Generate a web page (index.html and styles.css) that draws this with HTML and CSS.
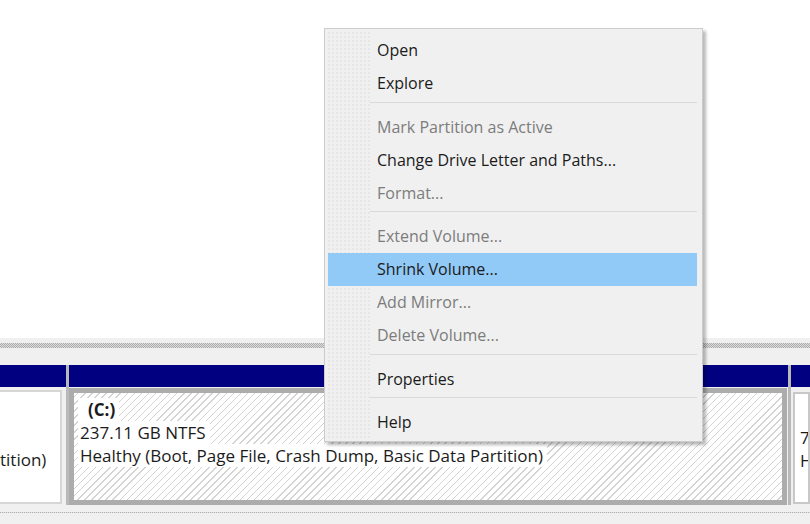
FILE: index.html
```html
<!DOCTYPE html>
<html>
<head>
<meta charset="utf-8">
<link rel="stylesheet" href="styles.css">
</head>
<body>
<div class="screen">
  <div class="top-pane"></div>
  <div class="splitter"><div class="splitter-line"></div></div>
  <div class="disk-row">
    <div class="part part-left">
      <div class="part-head"></div>
      <div class="part-body">
        <div class="box box-plain box-left">
          <div class="line"></div>
          <div class="line"></div>
          <div class="line line-right">tition)</div>
        </div>
      </div>
    </div>
    <div class="divider"></div>
    <div class="part part-c">
      <div class="part-head"></div>
      <div class="part-body">
        <div class="box box-sel">
          <div class="line"><span class="tag bold">(C:)</span></div>
          <div class="line"><span class="tag">237.11 GB NTFS</span></div>
          <div class="line"><span class="tag">Healthy (Boot, Page File, Crash Dump, Basic Data Partition)</span></div>
        </div>
      </div>
    </div>
    <div class="divider"></div>
    <div class="part part-right">
      <div class="part-head"></div>
      <div class="part-body">
        <div class="box box-plain box-right">
          <div class="line"></div>
          <div class="line">7</div>
          <div class="line">H</div>
        </div>
      </div>
    </div>
  </div>
  <div class="bottom"><div class="bottom-line"></div></div>

  <div class="menu">
    <div class="item">Open</div>
    <div class="item">Explore</div>
    <div class="sep"></div>
    <div class="item disabled">Mark Partition as Active</div>
    <div class="item">Change Drive Letter and Paths...</div>
    <div class="item disabled">Format...</div>
    <div class="sep"></div>
    <div class="item disabled">Extend Volume...</div>
    <div class="item hover">Shrink Volume...</div>
    <div class="item disabled">Add Mirror...</div>
    <div class="item disabled">Delete Volume...</div>
    <div class="sep"></div>
    <div class="item">Properties</div>
    <div class="sep"></div>
    <div class="item">Help</div>
  </div>
</div>
</body>
</html>
```
FILE: styles.css
```css
* { box-sizing: border-box; }
html, body { margin: 0; padding: 0; }
body {
  width: 810px;
  height: 524px;
  overflow: hidden;
  background: #ffffff;
  font-family: "Open Sans", "Noto Sans", sans-serif;
  font-size: 17px;
  color: #1b1b1b;
}
.screen {
  position: relative;
  width: 810px;
  height: 524px;
  display: flex;
  flex-direction: column;
}
.top-pane {
  height: 338px;
  background: #fff;
}
.splitter {
  height: 27px;
  background: #f0f0f0;
  padding-top: 5px;
}
.splitter-line {
  height: 5px;
  background: repeating-conic-gradient(#acacac 0 25%, #dcdcdc 0 50%) 0 0 / 2px 2px;
}
.disk-row {
  height: 140px;
  display: flex;
  background: #f0f0f0;
}
.divider {
  width: 3px;
  background: #b9b9b9;
}
.part { display: flex; flex-direction: column; }
.part-left { width: 66px; }
.part-c { flex: 1; }
.part-right { width: 19px; }
.part-head {
  height: 22px;
  background: #000080;
}
.part-body {
  flex: 1;
  padding-top: 1px;
}
.box {
  height: 117px;
  overflow: hidden;
  white-space: nowrap;
}
.box-plain {
  background: #fff;
  border: 2px solid #d6d6d6;
  padding-top: 10px;
}
.box-left {
  width: 62px;
  border-left: none;
  height: 114px;
  margin-top: 2px;
}
.line-right {
  text-align: right;
  padding-right: 14px;
}
.box-right {
  margin-left: 2px;
  height: 112px;
  margin-top: 4px;
  border-color: #c8c8c8;
  padding-left: 5px;
  padding-top: 9px;
}
.box-sel {
  border: 5px solid #acacac;
  background-color: #ffffff;
  background-image: repeating-linear-gradient(135deg, #ffffff 0 2.5px, #d3d3d3 2.5px 3.5px, #ffffff 3.5px 5px);
  padding: 5px 0 0 4px;
  margin-right: 1px;
}
.line {
  height: 23px;
  line-height: 23px;
}
.tag {
  background: #fff;
  padding: 0 4px 0 2px;
}
.bold {
  font-weight: 700;
  padding-left: 10px;
}
.bottom {
  flex: 1;
  background: #f0f0f0;
  padding-top: 7px;
}
.bottom-line {
  height: 1px;
  background: repeating-linear-gradient(90deg, #b0b0b0 0 1px, #e0e0e0 1px 2px);
}

/* context menu */
.menu {
  position: absolute;
  left: 324px;
  top: 28px;
  width: 379px;
  height: 414px;
  background: #f0f0f0;
  border: 1px solid #cccccc;
  padding: 5px 5px 2px 3px;
  box-shadow: 3px 3px 3px rgba(0, 0, 0, 0.28);
  font-size: 16px;
}
.menu::before {
  content: "";
  position: absolute;
  left: 2px;
  top: 2px;
  bottom: 2px;
  width: 43px;
  background-image: radial-gradient(circle, #e1e1e1 0.6px, transparent 0.9px);
  background-size: 4px 4px;
}
.item {
  position: relative;
  height: 33px;
  line-height: 33px;
  padding-left: 49px;
  color: #1b1b1b;
  white-space: nowrap;
}
.item.disabled { color: #7c7c7c; }
.item.hover { background: #91c9f7; }
.sep {
  height: 10.5px;
  padding-top: 1.5px;
  margin-left: 42px;
}
.sep::after {
  content: "";
  display: block;
  height: 1px;
  background: #d9d9d9;
}
```
